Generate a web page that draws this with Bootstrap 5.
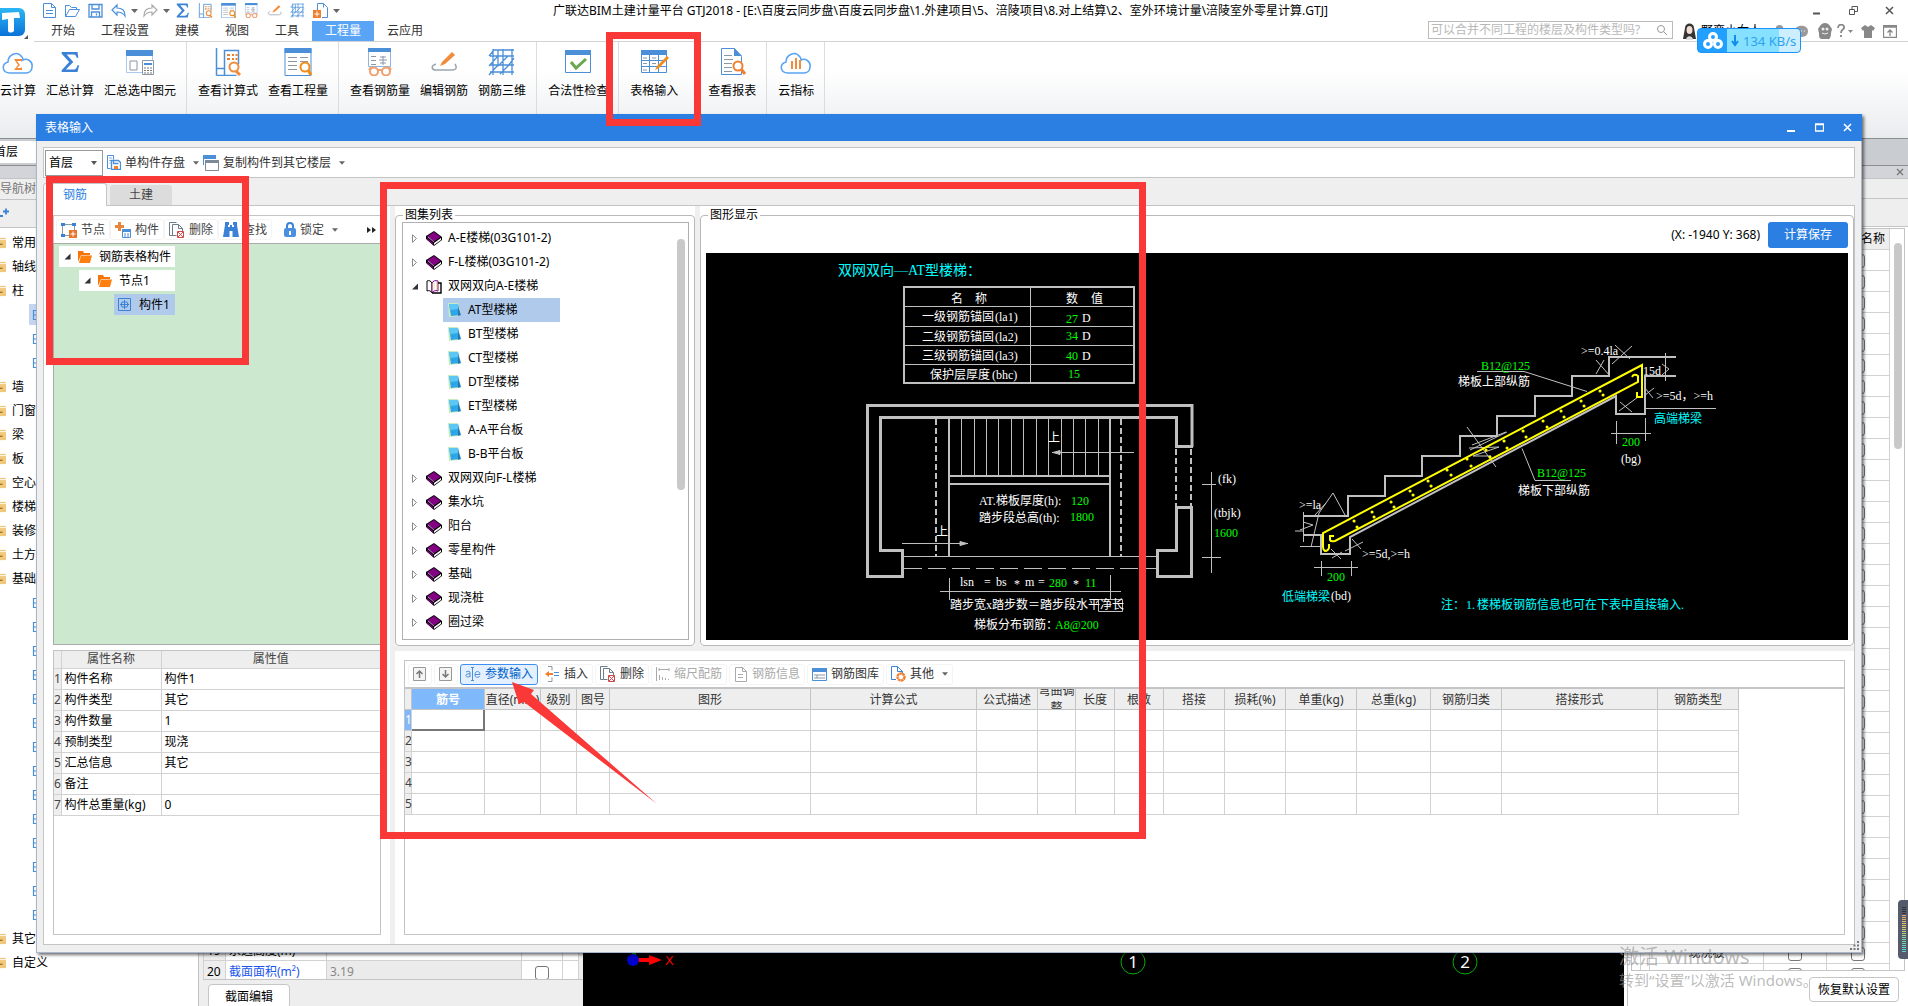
<!DOCTYPE html>
<html lang="zh-CN">
<head>
<meta charset="utf-8">
<meta name="viewport" content="width=device-width, initial-scale=1">
<title>广联达BIM土建计量平台 GTJ2018</title>
<link rel="stylesheet" href="https://cdn.jsdelivr.net/npm/bootstrap@5.3.0/dist/css/bootstrap.min.css">
<style>
:root{--blue:#2c7fe2;--line:#c3c4c6;--face:#efefef;--mark:#fb3838}
html,body{height:100%}
body{font:12px/18px "Noto Sans","Noto Sans CJK SC",sans-serif;color:#000;background:#fff;overflow:hidden}
a{color:inherit;text-decoration:none}
button,input,select{font:inherit;color:inherit}
button{background:none;border:0;padding:0;white-space:nowrap}
svg{display:block;flex:none}
.app{height:100vh}
/* header */
.logo-cell{width:34px;height:42px;padding-top:7px}
.quick{width:519px;padding-left:8px;gap:8px;height:21px}
.quick svg{width:15px;height:15px}
.quick svg.caret{width:7px;height:4px;margin:0 -3px}
.win-ctl{width:120px;padding-right:14px}
.menu-row{height:21px;border-bottom:1px solid #d2d2d2;padding-left:4px}
.menu-row .nav-link{padding:0 13px;line-height:20px;color:#333;border-radius:0}
.menu-row .nav-link.active{background:#5aa4f5;color:#fff}
.search{width:245px;height:18px;border:1px solid #bbb;margin-right:9px}
.search input{border:0;outline:0;width:100%;background:none;padding:0 2px;line-height:16px}
.search input::placeholder{color:#b8b8b8;opacity:1}
.user-bar{width:226px;white-space:nowrap}
.ribbon{height:96px;background:linear-gradient(#fff 30%,#e9ecef)}
.ribbon-group{gap:10px;padding:6px 10px 0 11px;border-right:1px solid #dadcde}
.ribbon-group:first-child{padding-left:0}
.ribbon-group.wide{padding-right:18px}
.ribbon-group button{line-height:18px}
.ribbon-group svg{width:32px;height:28px;margin:0 auto 6px}
/* workspace behind the dialog */
.strip-a{height:28px;border-top:1px solid #8c8e90;border-bottom:1px solid #8c8e90;background:#c9cdd2}
.floor-box{width:120px;margin:2px 0;background:#fff;line-height:22px;text-indent:-6px}
.strip-b{height:12px;background:#d3d4d9}
.side{width:199px;border-right:1px solid var(--line)}
.bar-1{height:22px;border-top:1px solid var(--line);border-bottom:1px solid var(--line);background:#eee;line-height:20px;color:#777}
.bar-2{height:28px;border-bottom:1px solid var(--line);background:#eee}
.nav-tree{padding-top:3px}
.nav-tree li{height:24px;line-height:24px;display:flex;align-items:center}
.nav-tree li a{padding-left:6px}
.nav-tree li.leaf{padding-left:29px}
.nav-tree li.picked svg{background:#c3d5ef}
.attr-col{width:384px;background:#eee;padding-left:4px}
.attr-tbl{width:376px;background:#fff;table-layout:fixed}
.attr-tbl td{height:21px;border:1px solid #d2d2d2;padding:0 3px;line-height:19px}
.attr-foot{height:27px;padding:4px 5px 0;margin-top:-3px;position:relative;background:#eee;border-top:1px solid var(--line)}
.flat-btn{border:1px solid #c6c6c6;border-radius:4px;background:#fff;height:25px;line-height:23px}
.model-view{background:#000}
.right-col{width:281px;border-left:1px solid var(--line);margin-left:3px}
.right-box{margin:1px 3px 0;border:1px solid var(--line);overflow:hidden}
.right-foot{height:36px;padding:6px 9px 0}
.right-tbl{table-layout:fixed;width:258px;border-collapse:separate;border-spacing:0}
.right-tbl th,.right-tbl td{height:21px;padding:0;border-right:1px solid #d2d2d2;border-bottom:1px solid #d2d2d2;text-align:center;line-height:18px;font-weight:400}
.right-tbl th{background:#eee}
.chk{width:14px;height:14px;appearance:none;border:1px solid #777;border-radius:3px;margin:3px auto 0;display:block;background:#fff}
.thumb{width:8px;border-radius:4px;background:#c9c9c9}
.side-thumb{height:206px;margin-top:14px}
/* dialog */
.dlg{position:absolute;left:36px;right:46px;top:114px;bottom:53px;background:var(--face);border:1px solid #aab6cc;border-top:0;box-shadow:2px 2px 3px rgba(0,0,0,.55)}
.dlg-title{height:27px;background:var(--blue);color:#fff;padding:0 10px 0 9px;margin:0 -1px}
.dlg-body{padding:6px 6px 7px}
.tool-strip{height:31px;border:1px solid var(--line);background:#fff;padding:0 1px;color:#333}
.tool-strip select{width:58px;height:26px;border:1px solid #999;border-radius:0;background:#fff url("data:image/svg+xml,%3Csvg xmlns='http://www.w3.org/2000/svg' width='6' height='4'%3E%3Cpath d='M0 0h6L3 4z' fill='%23555'/%3E%3C/svg%3E") no-repeat right 5px center;appearance:none;padding:0 3px;color:#000;margin-right:4px}
.tabs{height:27px;padding-top:5px}
.tabs .nav-link{line-height:20px;border-radius:3px 3px 0 0;padding:0 19px;color:#444;background:#dcdcdc;height:20px;margin:2px 0 0 3px;border:0}
.tabs .nav-link.active{background:#fff;color:var(--blue);height:23px;line-height:22px;border:1px solid var(--line);border-bottom:0;position:relative;margin:0 0 -1px}
.pane{border:1px solid var(--line);background:#fff}
.pane-left{width:346px;padding:9px 9px 9px}
.pane-left .bar{height:28px;border:1px solid var(--line);border-bottom:0;padding-left:2px;color:#444}
.bar .tb{display:flex;align-items:center;gap:4px;height:21px;padding:0 4px;border:1px solid #f4f4f4;border-radius:3px}
.comp-tree{background:#cce8cf;border:1px solid #aaa;padding:2px 0 0 5px}
.tree-ln{height:21px;margin-bottom:3px;line-height:21px;background:#fff}
.tree-ln.l1{width:116px;padding-left:5px}
.tree-ln.l2{width:96px;margin-left:20px;padding-left:5px}
.tree-ln.l3{width:61px;margin-left:55px;padding-left:4px;background:#b0caec}
.tree-ln svg+svg{margin:0 7px}
.prop-box{height:285px;border:1px solid var(--line);margin-top:5px}
.prop-tbl{width:100%;table-layout:fixed}
.prop-tbl th,.prop-tbl td{border-right:1px solid #d2d2d2;border-bottom:1px solid #d2d2d2;height:21px;padding:0 3px;line-height:18px;font-weight:400}
.prop-tbl tr>:last-child{border-right:0}
.prop-tbl thead th{background:#eee;height:17px;line-height:16px;text-align:center;color:#444}
.prop-tbl .num{background:#eee;padding:0;color:#444;text-align:center}
.splitter{width:5px;background:var(--face)}
.upper{background:var(--face);gap:5px;padding-bottom:5px}
.upper>div{background:#fff}
fieldset{border:1px solid #b9b9b9;border-radius:4px;margin-top:2px;padding:0 5px 5px}
fieldset legend{float:none;width:auto;font-size:12px;line-height:14px;height:14px;margin:0 0 0 2px;padding:0 2px}
.atlas{width:300px}
.atlas-box{height:100%;border:1px solid #b0b0b0;padding:3px 3px 0 8px;margin-left:1px;overflow:hidden}
.atlas-box li{height:24px;line-height:24px;display:flex;align-items:center}
.atlas-box li a{padding-left:6px;color:#000}
.atlas-box li>svg:first-child{margin-right:7px;width:8px}
.atlas-box li.kid{margin-left:32px;width:117px;padding-left:4px}
.atlas-box li.kid>svg:first-child{width:15px;margin-right:0}
.atlas-box li.on{background:#b0caec}
.atlas-box .thumb{height:251px;margin-top:13px}
.calc-row{height:31px}
.calc-row .btn{--bs-btn-bg:#2c7fe2;height:26px;width:80px;padding:0;font-size:12px;border:0;border-radius:3px;line-height:26px}
.cad{width:100%;flex:1 1 0;min-height:0;background:#000}
.lower{height:293px;padding:9px 9px 9px}
.lower-box{border:1px solid var(--line);overflow:hidden}
.lower .bar{height:28px;border-bottom:2px solid #c3c4c6;padding-left:3px;gap:2px;color:#333}
.lower .bar .tb.on{background:#e4f0fd;border-color:#3d8ff0;color:#0062cc}
.lower .bar .tb:disabled{color:#aaa}
.steel{table-layout:fixed;width:1334px;border-collapse:separate;border-spacing:0}
.steel th,.steel td{height:21px;padding:0;border-right:1px solid #d2d2d2;border-bottom:1px solid #d2d2d2;font-weight:400;line-height:18px}
.steel thead th{background:#eee;color:#333;text-align:center;border-color:#c3c4c6}
.steel thead div{height:20px;line-height:17px;overflow:hidden;display:flex;align-items:center;justify-content:center}
.steel thead .cur{background:#7fb9fb;color:#fff;font-weight:700}
.steel .num{background:#eee;color:#444;text-align:center}
.steel .num.cur{background:#7fb9fb;color:#fff}
.steel .focus-cell{box-shadow:inset -1px -1px #777;border-color:#777}
.grip{position:absolute;right:2px;bottom:2px}
/* overlays */
.mark-box{position:absolute;border:7px solid var(--mark);pointer-events:none}
.m1{left:606px;top:32px;width:95px;height:94px}
.m2{left:46px;top:176px;width:203px;height:189px}
.m3{left:380px;top:182px;width:766px;height:657px}
.m-arrow{position:absolute;left:510px;top:681px}
.netdisk{position:absolute;right:107px;top:28px;width:104px;height:25px;border:1px solid #1b93f8;border-radius:4px;background:linear-gradient(90deg,#22a0ff 29px,#86e0ff 29px 81px,#cdeeff 81px);color:#2ba3f0;font-size:13px;padding-left:5px}
.wmark{position:absolute;right:96px;top:945px;color:rgba(150,150,150,.65);width:193px;white-space:nowrap;font-size:15px;line-height:22px;pointer-events:none}
.wmark strong{font-size:20px;font-weight:400;line-height:24px;display:block}
.meter{position:absolute;right:0;top:900px;width:10px;height:59px;border-radius:4px 0 0 4px;background:#565b6b;padding:7px 2px 7px 4px}
.meter div{height:100%;background:repeating-linear-gradient(transparent 0 1px,#565b6b 1px 2px),linear-gradient(#333 18%,#e8a070 18%,#e8d070 45%,#70d8a8 75%,#60d0d8)}
/* drawing */
.cad text{font:12px "Liberation Serif","Noto Sans CJK SC",serif;fill:#fff}
.cad .g{fill:#0f0}.cad .c{fill:#0ff}.cad .t14{font-size:14px}
</style>
</head>
<body>
<svg width="0" height="0" class="position-absolute" aria-hidden="true">
<defs>
<symbol id="caret" viewBox="0 0 7 4"><path d="M0 0h7L3.500 4z" fill="#666"/></symbol>
<symbol id="doc" viewBox="0 0 15 15"><path d="M1.500.5h8l4 4v10h-12zM9.500.5v4h4M4 7.500h7M4 10.500h7" fill="none" stroke="#4a8fd8"/></symbol>
<symbol id="open" viewBox="0 0 15 15"><path d="M.5 13.500v-11h4l2 2h5v2M.5 13.500l4-7h10l-4 7z" fill="none" stroke="#4a8fd8"/></symbol>
<symbol id="disk" viewBox="0 0 15 15"><path d="M1 1.500h13v12.500H1zM4 1.500v4.500h7V1.500M3.500 14V9h8v5M8.500 10.500v2" fill="none" stroke="#4a8fd8" stroke-width="1.300"/></symbol>
<symbol id="undo" viewBox="0 0 15 15"><path d="M6 2L1 7l5 5V9c4 0 6 1 8 4 0-6-3-8-8-8z" fill="none" stroke="#4a8fd8" stroke-width="1.200"/></symbol>
<symbol id="redo" viewBox="0 0 15 15"><path d="M9 2l5 5-5 5V9c-4 0-6 1-8 4 0-6 3-8 8-8z" fill="none" stroke="#aaa" stroke-width="1.200"/></symbol>
<symbol id="sigma" viewBox="0 0 24 26"><path d="M2 1h19l1 7h-2c-1-4-2-4-5-4H8l8 9-9 9h9c3 0 4-1 5-5h2l-2 8H2v-2l9-10L2 3z" fill="#3b82d6"/></symbol>
<symbol id="calc" viewBox="0 0 28 28"><path d="M2.500 0v27.500M2.500 20.500h8v7M2.500 27.500h20M10.500 20V2.500h14V16" fill="none" stroke="#4a8fd8" stroke-width="1.500"/><path d="M13 6h3v2h-3zM18 6h2v2h-2zM21.500 6h2v2h-2zM13 10h3v2h-3zM18 10h2v2h-2zM21.500 10h2v2h-2z" fill="#e8802c"/><circle cx="20" cy="19" r="4.500" fill="#fff" stroke="#f08c3a" stroke-width="2"/><path d="M22 23l4 4" stroke="#f08c3a" stroke-width="3"/></symbol>
<symbol id="qty" viewBox="0 0 28 28"><path d="M1 .5h26v27H1z" fill="#fff" stroke="#4a8fd8"/><path d="M.5 0h27v5H.5z" fill="#4a8fd8"/><path d="M4 9.500h9M4 13.500h9M4 17.500h9M4 21.500h9M16 9.500h8M16 13.500h8" stroke="#8a97a6"/><circle cx="21" cy="19" r="4.500" fill="#fff" stroke="#f08c1a" stroke-width="2"/><path d="M24 22l3 5" stroke="#f08c1a" stroke-width="3"/></symbol>
<symbol id="glass" viewBox="0 0 28 28"><path d="M2.500.5h22v18h-22z" fill="#fff" stroke="#8bb6e6"/><path d="M2 0h23v4H2z" fill="#4a8fd8"/><path d="M5 8.500h5M5 12.500h5M5 16.500h5M13 12h8M17 8v9M14 9h6M14 15h6" stroke="#8a97a6"/><path d="M3 22l2-3M25 22l-2-3" stroke="#f0a070" stroke-width="2"/><circle cx="8" cy="23.500" r="4" fill="#fff" stroke="#f0a070" stroke-width="2"/><circle cx="20" cy="23.500" r="4" fill="#fff" stroke="#f0a070" stroke-width="2"/><path d="M12 22h4" stroke="#f0a070" stroke-width="2"/></symbol>
<symbol id="pen" viewBox="0 0 28 28"><path d="M6 16c-6 2-4 6 0 6h16c5 0 5-3 3-6" fill="none" stroke="#9aa5b0" stroke-width="1.500"/><path d="M10 18l2-4L22 4l3 3-10 9z" fill="#f08c3a"/></symbol>
<symbol id="grid3" viewBox="0 0 28 28"><path d="M2 8h24M2 17h24M2 24h24M5 1v26M15 1v26M24 1v26M1 8l5-6h20M1 18l9-10M10 18l10-10M20 18l6-8M1 27l9-10M12 26l9-9M10 2v16" fill="none" stroke="#4a8fd8" stroke-width="1.300"/></symbol>
<symbol id="adddoc" viewBox="0 0 15 15"><path d="M4.500 7V.5h6l4 4v10H9M10.500.5v4" fill="none" stroke="#4a8fd8"/><path d="M0 7h8v8H0z" fill="#f08030"/><path d="M4 8.500v5M1.500 11h5" stroke="#fff"/></symbol>
<symbol id="cloud" viewBox="0 0 32 28"><path d="M8 25c-8 0-9-9-2-11 0-7 9-12 14-5 1 1 1 2 1 3 4-2 10 1 9 7 0 4-3 6-6 6z" fill="none" stroke="#5aa4f5" stroke-width="1.600"/></symbol>
<symbol id="fold" viewBox="0 0 7 14"><path d="M0 1h7v12H0z" fill="#f0c87c"/><path d="M0 3h7" stroke="#fff"/><path d="M0 8.500h3" stroke="#a07020" stroke-width="1.500"/></symbol>
<symbol id="bits" viewBox="0 0 8 21"><path d="M4.500 6.500h7v9h-7zM4.500 11h5" fill="none" stroke="#4a8fd8" stroke-width="1.200"/></symbol>
<symbol id="orf" viewBox="0 0 14 12"><path d="M0 0h5l1 2h6v2H3L0 11z" fill="#f77408"/><path d="M3 4.500h11L12 12H1z" fill="#ff7f10"/></symbol>
<symbol id="dn" viewBox="0 0 7 7"><path d="M6.500.5v6h-6z" fill="#333"/></symbol>
<symbol id="rt" viewBox="0 0 8 9"><path d="M1.500.8v7.500l4-3.800z" fill="#fff" stroke="#888"/></symbol>
<symbol id="book" viewBox="0 0 16 15"><path d="M0 5L8 0l8 6v3l-8 6-8-7z" fill="#000"/><path d="M1 5.500L8 1l6.500 5L8 10.500z" fill="#820082"/><path d="M1 7l6 5v2L1 8.500z" fill="#820082"/><path d="M8 12l7-5v2l-7 5z" fill="#fff"/><path d="M2 6l6 5" stroke="#fff" stroke-width=".6"/></symbol>
<symbol id="bookopen" viewBox="0 0 16 15"><path d="M1 2c2-1 4 0 5 2v10c-1-2-3-3-5-2z" fill="#fff" stroke="#000"/><path d="M6 4c1-2 3-3 6-2v10c-3-1-5 0-6 2z" fill="#fff" stroke="#820082"/><path d="M12 4h3v10H6" fill="none" stroke="#000" stroke-width="1.400"/><path d="M8 4.500v6M10.500 3.500v7" stroke="#d8c820" stroke-dasharray="1 1"/></symbol>
<symbol id="note" viewBox="0 0 15 16"><path d="M1 1l10 0 3 11-3 2-9 1z" fill="#c9eac0"/><path d="M2 2h9l2 11-9 1z" fill="#2ea5e4"/><path d="M2 2h9l1 5-9 1z" fill="#5cc6f4"/><path d="M11 4l3 9-3 1z" fill="#2578b8"/></symbol>
<symbol id="del" viewBox="0 0 16 16"><path d="M3.500 13.500h-3V.5h7M3.500 2.500h6l4 4v3M3.500 2.500v11h4M9.500 2.500v4h4" fill="none" stroke="#6d7c86"/><path d="M8.500 9.500h6v6h-6z" fill="#fff" stroke="#d04848"/><path d="M9 10l5 5M14 10l-5 5" stroke="#d04848"/></symbol>
<symbol id="person" viewBox="0 0 14 14"><circle cx="7" cy="4" r="4" fill="#999"/><path d="M1 14c0-8 12-8 12 0z" fill="#999"/></symbol>
</defs>
</svg>

<div class="app d-flex flex-column">
<header>
  <div class="d-flex">
    <div class="logo-cell">
      <svg width="28" height="32" viewBox="0 0 28 32"><defs><linearGradient id="lg" x2="0" y2="1"><stop stop-color="#2bb6f6"/><stop offset="1" stop-color="#0a72d8"/></linearGradient></defs><rect x="-6" y="1" width="31" height="28" rx="6" fill="url(#lg)"/><path d="M2 6l17-1 1 6-6 0 0 13c-2 2-5 2-6 0V12l-6 1z" fill="#fff"/><path d="M28 28v4h-4z" fill="#555"/></svg>
    </div>
    <div class="flex-grow-1">
      <div class="d-flex align-items-center">
        <div class="quick d-flex align-items-center">
          <svg><use href="#doc"/></svg><svg><use href="#open"/></svg><svg><use href="#disk"/></svg><svg><use href="#undo"/></svg><svg class="caret"><use href="#caret"/></svg><svg><use href="#redo"/></svg><svg class="caret"><use href="#caret"/></svg><svg><use href="#sigma"/></svg><svg><use href="#calc"/></svg><svg><use href="#qty"/></svg><svg><use href="#glass"/></svg><svg><use href="#pen"/></svg><svg><use href="#grid3"/></svg><svg><use href="#adddoc"/></svg><svg class="caret"><use href="#caret"/></svg>
        </div>
        <div>广联达BIM土建计量平台 GTJ2018 - [E:\百度云同步盘\百度云同步盘\1.外建项目\5、涪陵项目\8.对上结算\2、室外环境计量\涪陵室外零星计算.GTJ]</div>
        <div class="win-ctl ms-auto d-flex justify-content-between ps-4">
          <svg width="9" height="9"><path d="M1 7.500h7" stroke="#555" stroke-width="2"/></svg>
          <svg width="9" height="9"><path d="M.5 3.500h5v5h-5zM3 3V.5h5.500v5H6" fill="none" stroke="#555"/></svg>
          <svg width="9" height="9"><path d="M1 1l7 7M8 1L1 8" stroke="#555" stroke-width="1.500"/></svg>
        </div>
      </div>
      <div class="menu-row d-flex">
        <nav class="nav flex-nowrap">
          <a class="nav-link" href="#">开始</a><a class="nav-link" href="#">工程设置</a><a class="nav-link" href="#">建模</a><a class="nav-link" href="#">视图</a><a class="nav-link" href="#">工具</a><a class="nav-link active" href="#">工程量</a><a class="nav-link" href="#">云应用</a>
        </nav>
        <label class="search ms-auto d-flex align-items-center"><input type="text" aria-label="搜索" placeholder="可以合并不同工程的楼层及构件类型吗?"><svg width="12" height="12" class="me-1"><circle cx="5" cy="5" r="3.500" fill="none" stroke="#999"/><path d="M8 8l3 3" stroke="#999"/></svg></label>
        <div class="user-bar d-flex align-items-center gap-1">
          <svg width="15" height="17"><path d="M3 5c0-6 9-6 9 0l2 11H1z" fill="#333"/><ellipse cx="7.500" cy="7" rx="3" ry="4" fill="#f2dcd4"/><path d="M4 17c0-5 7-5 7 0z" fill="#ddd"/></svg>
          <span>野蛮小女人</span>
          <svg width="13" height="15" class="ms-2"><use href="#person"/></svg>
          <svg width="15" height="15" class="ms-1"><path d="M1 7c0-7 13-7 13 0s-7 6-9 6l-3 1 1-3c-1-1-2-2-2-4z" fill="#999"/><path d="M4 7h1M7 7h1M10 7h1" stroke="#fff"/></svg>
          <svg width="16" height="18" class="ms-1"><path d="M1 7l2-3c2-4 8-4 10 0l2 3-1 4c0 5-2 7-3 6H5c-3 0-3-3-3-6z" fill="#888"/><circle cx="6" cy="7" r="1.500" fill="#eee"/><circle cx="10" cy="7" r="1.500" fill="#eee"/><path d="M5 11q3 2 6 0" stroke="#eee" fill="none"/></svg>
          <svg width="16" height="14"><path d="M1 4c0-5 7-4 6 0-1 2-3 2-3 5M4 11v2" fill="none" stroke="#888" stroke-width="1.800"/><path d="M11 6h5l-2.500 3z" fill="#888"/></svg>
          <svg width="14" height="13" class="ms-1"><path d="M4 0l3 2 3-2 4 3-2 3-1-1v8H3V5L2 6 0 3z" fill="#888"/></svg>
          <svg width="14" height="13" class="ms-1"><path d="M.5.5h13v12H.5zM0 2h14M7 11V5M4.500 7.500L7 5l2.500 2.500" fill="none" stroke="#888" stroke-width="1.300"/></svg>
        </div>
      </div>
    </div>
  </div>
  <div class="ribbon d-flex">
    <div class="ribbon-group d-flex align-items-start">
      <button><svg viewBox="0 0 32 28"><use href="#cloud"/><path d="M12 11h8v3l-1-1h-4l3 4-3 3h4l1-1v3h-8l4-5z" fill="#f08c3a"/></svg>云计算</button>
      <button><svg viewBox="-4 0 32 28"><use href="#sigma" x="2" width="20" height="28"/></svg>汇总计算</button>
      <button><svg viewBox="0 0 32 28"><path d="M2.500 2.500h26v22h-26z" fill="#fff" stroke="#a9c9ee"/><path d="M2 2h27v6H2z" fill="#4a8fd8"/><path d="M6 13h7v9H6z" fill="none" stroke="#8a97a6"/><path d="M18.500 12.500h11v14h-11z" fill="#fff" stroke="#8a97a6"/><path d="M20 15h8v2h-8z" fill="#4a8fd8"/><path d="M20 20h8M20 22.500h8M20 25h8" stroke="#777" stroke-dasharray="2 1"/></svg>汇总选中图元</button>
    </div>
    <div class="ribbon-group d-flex align-items-start">
      <button><svg><use href="#calc"/></svg>查看计算式</button>
      <button><svg><use href="#qty"/></svg>查看工程量</button>
    </div>
    <div class="ribbon-group d-flex align-items-start">
      <button><svg><use href="#glass"/></svg>查看钢筋量</button>
      <button><svg><use href="#pen"/></svg>编辑钢筋</button>
      <button><svg><use href="#grid3"/></svg>钢筋三维</button>
    </div>
    <div class="ribbon-group d-flex align-items-start">
      <button><svg viewBox="0 0 32 28"><path d="M3.500 3.500h25v21h-25z" fill="#fff" stroke="#4a8fd8"/><path d="M3 2h26v5H3z" fill="#4a8fd8"/><path d="M9 14l5 6 10-9" fill="none" stroke="#6aa84f" stroke-width="3"/></svg>合法性检查</button>
    </div>
    <div class="ribbon-group wide d-flex align-items-start">
      <button><svg viewBox="0 0 32 28"><path d="M3.500 3.500h25v21h-25zM3 12.500h26M3 18.500h26M11.500 7v18M20.500 7v18" fill="#fff" stroke="#4a8fd8"/><path d="M3 2h26v5H3z" fill="#4a8fd8"/><path d="M5 10h4M14 10h4M5 15.500h4M14 15.500h4M5 22h4" stroke="#8a97a6"/><path d="M17 22l2-4 10-10 2 2-10 10z" fill="#f08c1a"/></svg>表格输入</button>
    </div>
    <div class="ribbon-group d-flex align-items-start">
      <button><svg viewBox="0 0 32 28"><path d="M5.500.5h13l7 8v18h-20z" fill="#fff" stroke="#4a8fd8"/><path d="M18 0v8h8z" fill="#4a8fd8"/><path d="M8 7.500h8M8 11.500h9M8 15.500h8M8 19.500h8M8 23.500h8" stroke="#8a97a6"/><circle cx="22" cy="18" r="4.500" fill="#fff" stroke="#f08030" stroke-width="2"/><path d="M25 21l4 5" stroke="#f08030" stroke-width="3"/></svg>查看报表</button>
    </div>
    <div class="ribbon-group d-flex align-items-start">
      <button><svg viewBox="0 0 32 28"><use href="#cloud"/><path d="M12 13v8M16 10v11M20 12v9" stroke="#f08c3a" stroke-width="2"/></svg>云指标</button>
    </div>
  </div>
</header>

<div class="strip-a"><div class="floor-box">首层</div></div>
<div class="strip-b d-flex align-items-center justify-content-end pe-1"><svg width="8" height="8"><path d="M1 1l6 6M7 1L1 7" stroke="#777" stroke-width="1.300"/></svg></div>
<div class="d-flex flex-grow-1 overflow-hidden">
  <aside class="side overflow-hidden flex-shrink-0">
    <div class="bar-1 overflow-hidden">导航树</div>
    <div class="bar-2 d-flex align-items-center"><svg width="10" height="14"><path d="M0 10h3M3 5.500h6M6 2.500v6" stroke="#3b82d6" stroke-width="1.800"/></svg></div>
    <ul class="nav-tree list-unstyled m-0" id="navTree"></ul>
  </aside>
  <section class="attr-col d-flex flex-column justify-content-end flex-shrink-0">
    <table class="attr-tbl"><colgroup><col style="width:22px"><col style="width:101px"><col><col style="width:41px"><col style="width:16px"></colgroup>
      <tr><td style="background:#eee">19</td><td>永远高度(m)</td><td></td><td></td><td></td></tr>
      <tr><td style="background:#eee">20</td><td style="color:#1a56ee">截面面积(m²)</td><td style="background:#ebebeb;color:#888">3.19</td><td class="p-0"><input type="checkbox" class="chk" aria-label="截面面积附加"></td><td></td></tr>
    </table>
    <div class="attr-foot overflow-hidden"><button class="flat-btn px-3">截面编辑</button></div>
  </section>
  <section class="model-view flex-grow-1 d-flex align-items-end">
    <svg width="100%" height="53" viewBox="0 0 1041 53" preserveAspectRatio="xMinYMax slice"><path d="M51 0v6" stroke="#0a0" stroke-width="4"/><path d="M55 7h14" stroke="red" stroke-width="4"/><path d="M66 2l13 5-13 5z" fill="red"/><circle cx="50" cy="7" r="6" fill="#00c"/><text x="82" y="12" fill="red" font-size="13" font-family="Liberation Sans">X</text><g fill="none" stroke="#0a0"><circle cx="550" cy="9" r="12"/><circle cx="882" cy="9" r="12"/></g><g fill="#fff" font-size="17" text-anchor="middle"><text x="550" y="15">1</text><text x="882" y="15">2</text></g></svg>
  </section>
  <section class="right-col d-flex flex-column flex-shrink-0">
    <div class="bar-1"></div><div class="bar-2"></div>
    <div class="right-box d-flex flex-grow-1">
      <div class="overflow-hidden"><table class="right-tbl"><colgroup><col style="width:9px"><col style="width:9px"><col><col style="width:63px"><col style="width:63px"></colgroup><thead><tr><th></th><th></th><th></th><th></th><th class="text-end pe-1">名称</th></tr></thead><tbody id="rightRows"></tbody></table></div>
      <div class="thumb side-thumb ms-1"></div>
    </div>
    <div class="right-foot text-end"><button class="flat-btn px-2">恢复默认设置</button></div>
  </section>
</div>
</div>

<main class="dlg d-flex flex-column">
  <div class="dlg-title d-flex align-items-center">表格输入
    <div class="ms-auto d-flex" style="gap:19px">
      <svg width="9" height="9"><path d="M0 8h8" stroke="#fff" stroke-width="2"/></svg>
      <svg width="9" height="9"><path d="M.5 1v7h8V1zM0 1.500h9" fill="none" stroke="#fff" stroke-width="1.300"/></svg>
      <svg width="9" height="9"><path d="M1 1l7 7M8 1L1 8" stroke="#fff" stroke-width="1.600"/></svg>
    </div>
  </div>
  <div class="dlg-body d-flex flex-column flex-grow-1">
    <div class="tool-strip d-flex align-items-center">
      <select aria-label="楼层"><option>首层</option></select>
      <button class="d-flex align-items-center gap-1"><svg width="14" height="15"><path d="M3.500 13.500h-3V.5h6v4M2.500 3h2M2.500 5.500h2M2.500 8h1" fill="none" stroke="#4a8fd8"/><path d="M4.500 5.500h7l2 2v7h-9zM6.500 5.500v3h5" fill="#fff" stroke="#4a8fd8" stroke-width="1.300"/><path d="M7 11h4v3H7z" fill="#f08030"/></svg><span>单构件存盘</span><svg width="6" height="4" class="ms-1"><use href="#caret"/></svg></button>
      <button class="d-flex align-items-center ms-1"><svg width="16" height="16"><path d="M.5 10V.5h12V3" fill="none" stroke="#4a8fd8"/><path d="M0 0h13v4H0z" fill="#4a8fd8"/><path d="M2.500 5.500h13v10h-13z" fill="#fff" stroke="#7e8b96"/><path d="M2 5h14v3H2z" fill="#7e8b96"/></svg><span class="ps-1">复制构件到其它楼层</span><svg width="6" height="4" class="ms-2"><use href="#caret"/></svg></button>
    </div>
    <nav class="tabs nav"><a class="nav-link active" href="#">钢筋</a><a class="nav-link" href="#">土建</a></nav>
    <div class="pane d-flex flex-grow-1">
      <section class="pane-left d-flex flex-column flex-shrink-0">
        <div class="bar d-flex align-items-center">
          <button class="tb"><svg width="16" height="16"><path d="M3 2.500h9M3 13.500h5M1.500 4v8M13.500 4v4" stroke="#8a97a6" fill="none"/><path d="M0 1h4v3H0zM11 1h4v3h-4zM0 12h4v3H0z" fill="#3b82d6"/><path d="M8 8h8v8H8z" fill="#e8762c"/><path d="M12 9.500v5M9.500 12h5" stroke="#fff"/></svg>节点</button>
          <button class="tb"><svg width="16" height="16"><path d="M3 0h3v3h3v3H6v3H3V6H0V3h3z" fill="#e8853c"/><path d="M7.500 7.500h8v8h-8z" fill="#fff" stroke="#4a8fd8"/><path d="M7 7h9v3H7z" fill="#4a8fd8"/><path d="M9 12h5M9 14h5" stroke="#4a8fd8" stroke-dasharray="2 1"/></svg>构件</button>
          <button class="tb"><svg width="16" height="16"><use href="#del"/></svg>删除</button>
          <button class="tb"><svg width="16" height="16"><path d="M2 3h3v2h2V3h2v2h2V3h3l2 12H9.500V9h-3v6H0z" fill="#3b82d6"/><path d="M2 0h4v3H2zM10 0h4v3h-4z" fill="#3b82d6"/></svg>查找</button>
          <button class="tb border-0 ps-2 ms-1"><svg width="12" height="15"><path d="M3 7V4c0-4 6-4 6 0v3" fill="none" stroke="#3b82d6" stroke-width="2"/><rect y="6" width="12" height="9" rx="2" fill="#4a8fe0"/><path d="M6 9v4" stroke="#fff" stroke-width="2"/></svg>锁定<svg width="6" height="4" class="ms-1"><use href="#caret"/></svg></button>
          <svg width="9" height="6" class="ms-auto me-1"><path d="M0 0v6l4-3zM5 0v6l4-3z" fill="#222"/></svg>
        </div>
        <div class="comp-tree flex-grow-1">
          <div class="tree-ln l1 d-flex align-items-center"><svg width="7" height="7"><use href="#dn"/></svg><svg width="14" height="12"><use href="#orf"/></svg>钢筋表格构件</div>
          <div class="tree-ln l2 d-flex align-items-center"><svg width="7" height="7"><use href="#dn"/></svg><svg width="14" height="12"><use href="#orf"/></svg>节点1</div>
          <div class="tree-ln l3 d-flex align-items-center"><svg width="13" height="13" class="me-2"><path d="M.5.5h12v12H.5zM2 6.500h9M6.500 2v9M4 4q-2 2.500 0 5h5q2-2.500 0-5z" fill="none" stroke="#3b82d6"/></svg>构件1</div>
        </div>
        <div class="prop-box">
          <table class="prop-tbl"><colgroup><col style="width:7px"><col style="width:100px"><col></colgroup>
            <thead><tr><th></th><th>属性名称</th><th>属性值</th></tr></thead>
            <tbody>
            <tr><td class="num">1</td><td>构件名称</td><td>构件1</td></tr>
            <tr><td class="num">2</td><td>构件类型</td><td>其它</td></tr>
            <tr><td class="num">3</td><td>构件数量</td><td>1</td></tr>
            <tr><td class="num">4</td><td>预制类型</td><td>现浇</td></tr>
            <tr><td class="num">5</td><td>汇总信息</td><td>其它</td></tr>
            <tr><td class="num">6</td><td>备注</td><td></td></tr>
            <tr><td class="num">7</td><td>构件总重量(kg)</td><td>0</td></tr>
            </tbody></table>
        </div>
      </section>
      <div class="splitter flex-shrink-0"></div>
      <section class="d-flex flex-column flex-grow-1" style="min-width:0">
        <div class="upper d-flex flex-grow-1">
          <div class="atlas flex-shrink-0 d-flex"><fieldset class="flex-grow-1"><legend>图集列表</legend>
            <div class="atlas-box d-flex">
              <ul class="list-unstyled m-0 flex-grow-1">
                <li><svg height="9"><use href="#rt"/></svg><svg width="16" height="15"><use href="#book"/></svg><a href="#">A-E楼梯(03G101-2)</a></li>
                <li><svg height="9"><use href="#rt"/></svg><svg width="16" height="15"><use href="#book"/></svg><a href="#">F-L楼梯(03G101-2)</a></li>
                <li><svg height="7"><use href="#dn"/></svg><svg width="16" height="15"><use href="#bookopen"/></svg><a href="#">双网双向A-E楼梯</a></li>
                <li class="kid on"><svg height="16"><use href="#note"/></svg><a href="#">AT型楼梯</a></li>
                <li class="kid"><svg height="16"><use href="#note"/></svg><a href="#">BT型楼梯</a></li>
                <li class="kid"><svg height="16"><use href="#note"/></svg><a href="#">CT型楼梯</a></li>
                <li class="kid"><svg height="16"><use href="#note"/></svg><a href="#">DT型楼梯</a></li>
                <li class="kid"><svg height="16"><use href="#note"/></svg><a href="#">ET型楼梯</a></li>
                <li class="kid"><svg height="16"><use href="#note"/></svg><a href="#">A-A平台板</a></li>
                <li class="kid"><svg height="16"><use href="#note"/></svg><a href="#">B-B平台板</a></li>
                <li><svg height="9"><use href="#rt"/></svg><svg width="16" height="15"><use href="#book"/></svg><a href="#">双网双向F-L楼梯</a></li>
                <li><svg height="9"><use href="#rt"/></svg><svg width="16" height="15"><use href="#book"/></svg><a href="#">集水坑</a></li>
                <li><svg height="9"><use href="#rt"/></svg><svg width="16" height="15"><use href="#book"/></svg><a href="#">阳台</a></li>
                <li><svg height="9"><use href="#rt"/></svg><svg width="16" height="15"><use href="#book"/></svg><a href="#">零星构件</a></li>
                <li><svg height="9"><use href="#rt"/></svg><svg width="16" height="15"><use href="#book"/></svg><a href="#">基础</a></li>
                <li><svg height="9"><use href="#rt"/></svg><svg width="16" height="15"><use href="#book"/></svg><a href="#">现浇桩</a></li>
                <li><svg height="9"><use href="#rt"/></svg><svg width="16" height="15"><use href="#book"/></svg><a href="#">圈过梁</a></li>
              </ul>
              <div class="thumb"></div>
            </div></fieldset></div>
          <div class="flex-grow-1 d-flex"><fieldset class="d-flex flex-column flex-grow-1"><legend>图形显示</legend>
            <div class="calc-row d-flex justify-content-end align-items-start flex-shrink-0"><span class="pt-1 me-2">(X: -1940 Y: 368)</span><button class="btn btn-primary">计算保存</button></div>
            <svg class="cad" viewBox="706 253 1142 387" preserveAspectRatio="xMidYMid meet">
              <g fill="none" stroke="#c0c0c0">
                <path stroke-width="2" d="M904 287h230v96H904z"/>
                <path d="M904 306.500h230M904 326.500h230M904 345.500h230M904 364.500h230M1030.500 287v96"/>
                <path stroke-width="3" d="M1192 447V405.500H867.500V576.500H902.500V550.500H880.500V417.500H1176.500V446.500H1193M1193 507.500H1176.500V550.500H1157.500V576.500H1191.500V507"/>
                <path stroke-width="2" stroke-dasharray="6 3" d="M936 419v137M1121 419v137M1176 449v58M1191 449v58"/>
                <path stroke-width="2" d="M949 417v140M1110 417v140M949 476h161M949 484h161"/>
                <path d="M961.500 418v57M974.500 418v57M986.500 418v57M998.500 418v57M1011.500 418v57M1023.500 418v57M1036.500 418v57M1048.500 418v57M1061.500 418v57M1073.500 418v57M1085.500 418v57M1098.500 418v57M903 556.500h254M1052 452.500h82M902 543.500h66"/>
                <path stroke-dasharray="18 6" d="M904 568.500h253"/>
                <path d="M940 591.500h181M949.500 578v22M1110.500 575v24M1211.500 472v101M1202 484.500h14M1202 557.500h19M1098.500 599.500h24v12h-24z"/>
                <path d="M1053 452.500l7-2v4zM967 543.500l-7-2v4z" fill="#c0c0c0"/>
                <path stroke-width="2" d="M1303 516H1348V496H1385V476H1422V456H1460V436H1497V416H1535V396H1572V376H1609V357H1676M1676 376H1645V414H1616V396L1350 537V554H1321V535H1303"/>
                <path d="M1477 371.500h47l63 20M1571 480.500h-36l-13-32M1645 408.500h71M1611 433.500h40M1616.500 421v23M1645.500 418v23M1314 567.500h44M1321.500 561v15M1351.500 561v15M1665.500 353v28M1662 364l7 5-7 6M1303.500 512v30M1303 522l10 3-13 5M1295 531h8M1300 546.500h20M1311 547l8-34 14-20 12 22M1315 515l11-12"/>
                <path d="M1596 360l14 16M1604 360l-8 14M1615 345l15 14M1632 346l-20 18M1620 402l12 10M1619 411l19-14M1645 388l8 10M1654 388l-10 8M1331 549l10 10M1345 551l18-9M1352 539l9 10M1332 558l10-6"/>
                <path d="M1467 427l29 40M1470 450l37-18M1469 448l30-1-26 9h18M1472 445l34-13"/>
              </g>
              <g fill="none" stroke="#ff0" stroke-width="2">
                <path d="M1329 544v4q-1 3-4 3-2-1-2-4V533L1642 365V397H1637V392M1334 536h-4v4q1 2 5 1L1638 382V376q-4-3-6 1"/>
                <path id="bars" stroke-width="3" stroke-linecap="round"/>
              </g>
              <g>
                <text class="c t14" x="838" y="275">双网双向—AT型楼梯：</text>
                <text x="951" y="303">名</text><text x="975" y="303">称</text><text x="1066" y="303">数</text><text x="1091" y="303">值</text>
                <text x="922" y="321">一级钢筋锚固</text><text x="995" y="321">(la1)</text><text class="g" x="1066" y="323">27</text><text x="1082" y="322">D</text>
                <text x="922" y="341">二级钢筋锚固</text><text x="995" y="341">(la2)</text><text class="g" x="1066" y="340">34</text><text x="1082" y="340">D</text>
                <text x="922" y="360">三级钢筋锚固</text><text x="995" y="360">(la3)</text><text class="g" x="1066" y="360">40</text><text x="1082" y="360">D</text>
                <text x="930" y="379">保护层厚度</text><text x="992" y="379">(bhc)</text><text class="g" x="1068" y="378">15</text>
                <text x="1048" y="442">上</text><text x="936" y="536">上</text>
                <text x="979" y="505">AT.</text><text x="996" y="505">梯板厚度(h):</text><text class="g" x="1071" y="505">120</text>
                <text x="979" y="522">踏步段总高(th):</text><text class="g" x="1070" y="521">1800</text>
                <text x="960" y="586">lsn</text><text x="984" y="586">=</text><text x="996" y="586">bs</text><text x="1014" y="588">*</text><text x="1025" y="586">m</text><text x="1038" y="586">=</text><text class="g" x="1049" y="587">280</text><text x="1073" y="588">*</text><text class="g" x="1085" y="587">11</text>
                <text x="950" y="609">踏步宽x踏步数＝踏步段水平净长</text>
                <text x="974" y="629">梯板分布钢筋：</text><text class="g" x="1055" y="629">A8@200</text>
                <text x="1218" y="483">(fk)</text><text x="1214" y="517">(tbjk)</text><text class="g" x="1214" y="537">1600</text>
                <text class="g" x="1481" y="370">B12@125</text><text x="1458" y="386">梯板上部纵筋</text>
                <text class="g" x="1537" y="477">B12@125</text><text x="1518" y="495">梯板下部纵筋</text>
                <text x="1581" y="355">&gt;=0.4la</text><text x="1643" y="375">15d</text><text x="1656" y="400">&gt;=5d，&gt;=h</text>
                <text class="c" x="1654" y="423">高端梯梁</text><text class="g" x="1622" y="446">200</text><text x="1621" y="463">(bg)</text>
                <text x="1299" y="509">&gt;=la</text><text x="1362" y="558">&gt;=5d,&gt;=h</text><text class="g" x="1327" y="581">200</text>
                <text class="c" x="1282" y="601">低端梯梁</text><text x="1331" y="600">(bd)</text>
                <text class="c" x="1441" y="609">注：</text><text class="c" x="1466" y="609">1.</text><text class="c" x="1477" y="609">楼梯板钢筋信息也可在下表中直接输入.</text>
              </g>
            </svg>
          </fieldset></div>
        </div>
        <div class="lower d-flex flex-column flex-shrink-0">
          <div class="lower-box flex-grow-1">
            <div class="bar d-flex align-items-center">
              <button class="tb px-1" aria-label="上移"><svg width="14" height="14"><path d="M.5.5h12v13H.5z" fill="#f4f4f4" stroke="#999"/><path d="M6.500 11V4M3.500 7l3-3 3 3" fill="none" stroke="#777" stroke-width="1.500"/></svg></button>
              <button class="tb px-1" aria-label="下移"><svg width="14" height="14"><path d="M.5.5h12v13H.5z" fill="#f4f4f4" stroke="#999"/><path d="M6.500 3v7M3.500 7l3 3 3-3" fill="none" stroke="#777" stroke-width="1.500"/></svg></button>
              <button class="tb on px-1"><svg width="16" height="14"><path d="M1 5q4-2 4 1v4M5 7c-5-1-5 3-2 3q2 0 2-1M10 7.500h5c0-4-5-4-5 0s4 3 5 1.500M7.500 1v12M6 .5h3M6 13.500h3" fill="none" stroke="#4a8fd8"/></svg>参数输入</button>
              <button class="tb"><svg width="15" height="16"><path d="M3 .5h4v4M3 15.500h4v-4" fill="none" stroke="#8a97a6"/><path d="M0 8l4-3v2h4v2H4v2z" fill="#f08030"/><path d="M9 6.500h5M9 9.500h5" stroke="#4a8fd8"/></svg>插入</button>
              <button class="tb"><svg width="16" height="16"><use href="#del"/></svg>删除</button>
              <button class="tb" disabled><svg width="14" height="14"><path d="M.5 0v14M3 2.500h10M3 1v3M13 1v3M3.500 8v5M6.500 10v3M9.500 11v2M12.500 12v1" stroke="#aaa"/></svg>缩尺配筋</button>
              <button class="tb" disabled><svg width="14" height="15"><path d="M1.500.5h7l4 4v10h-11zM8.500.5v4h4M4 7.500h5M4 10.500h5" fill="none" stroke="#aaa"/></svg>钢筋信息</button>
              <button class="tb"><svg width="15" height="13"><path d="M.5.5h14v12H.5z" fill="#fff" stroke="#4a8fd8"/><path d="M0 0h15v4H0z" fill="#4a8fd8"/><path d="M2 7h11M2 10h11M5 7v3" stroke="#8a97a6"/></svg>钢筋图库</button>
              <button class="tb"><svg width="15" height="16"><path d="M5 13.500H.5V.5h6l5 5v2M6.500.5v5h5" fill="none" stroke="#3b82d6"/><circle cx="10" cy="11" r="3.500" fill="none" stroke="#f08030" stroke-width="2.500" stroke-dasharray="2.500 .4"/></svg>其他<svg width="6" height="4" class="ms-1"><use href="#caret"/></svg></button>
            </div>
            <table class="steel"><colgroup><col style="width:7px"><col style="width:73px"><col style="width:56px"><col style="width:36px"><col style="width:33px"><col style="width:201px"><col style="width:166px"><col style="width:61px"><col style="width:38px"><col style="width:39px"><col style="width:49px"><col style="width:61px"><col style="width:61px"><col style="width:71px"><col style="width:74px"><col style="width:71px"><col style="width:156px"><col style="width:81px"></colgroup>
              <thead><tr><th></th><th class="cur"><div>筋号</div></th><th><div>直径(mm)</div></th><th><div>级别</div></th><th><div>图号</div></th><th><div>图形</div></th><th><div>计算公式</div></th><th><div>公式描述</div></th><th><div>弯曲调整</div></th><th><div>长度</div></th><th><div>根数</div></th><th><div>搭接</div></th><th><div>损耗(%)</div></th><th><div>单重(kg)</div></th><th><div>总重(kg)</div></th><th><div>钢筋归类</div></th><th><div>搭接形式</div></th><th><div>钢筋类型</div></th></tr></thead>
              <tbody id="steelRows"></tbody>
            </table>
          </div>
        </div>
      </section>
    </div>
  </div>
  <svg class="grip" width="9" height="9"><path d="M7 0h2v2H7zM3.500 3.500h2v2h-2zM7 3.500h2v2H7zM0 7h2v2H0zM3.500 7h2v2h-2zM7 7h2v2H7z" fill="#777"/></svg>
</main>

<div class="netdisk d-flex align-items-center"><svg width="20" height="18"><g fill="none" stroke="#fff" stroke-width="3"><circle cx="10" cy="5" r="3.500"/><circle cx="5" cy="12" r="3.500"/><circle cx="15" cy="12" r="3.500"/></g></svg><svg width="8" height="11" class="mx-1 ps-1 overflow-visible"><path d="M4 0v9M1 6l3 4 3-4" fill="none" stroke="#0e8ee8" stroke-width="2"/></svg><span class="ps-1">134 KB/s</span></div>
<div class="wmark"><strong>激活 Windows</strong>转到“设置”以激活 Windows。</div>
<div class="meter"><div></div></div>
<div class="mark-box m1"></div><div class="mark-box m2"></div><div class="mark-box m3"></div>
<svg class="m-arrow" width="150" height="126"><path d="M2 1L24 9 21 13 147 123 14 21 9 23z" fill="#fb3838"/></svg>

<script src="https://cdn.jsdelivr.net/npm/bootstrap@5.3.0/dist/js/bootstrap.bundle.min.js"></script>
<script>
// navigation tree: an empty name is a leaf hidden behind the dialog
const names = ['常用','轴线','柱','','','','墙','门窗','梁','板','空心','楼梯','装修','土方','基础',
  ...Array(14).fill(''),'其它','自定义'];
document.getElementById('navTree').innerHTML = names.map((n, i) => n
  ? `<li><svg width="6" height="14"><use href="#fold"/></svg><a href="#">${n}</a></li>`
  : `<li class="leaf${i === 3 ? ' picked' : ''}"><svg width="8" height="21"><use href="#bits"/></svg></li>`).join('');
const box = '<input type="checkbox" class="chk" aria-label="显示">';
document.getElementById('rightRows').innerHTML = Array.from({length: 35}, (_, i) =>
  `<tr><td></td><td></td><td>${i === 33 ? '现浇板' : ''}</td><td>${box}</td><td>${box}</td></tr>`).join('');
document.getElementById('steelRows').innerHTML = [1,2,3,4,5].map(n =>
  `<tr><td class="num${n === 1 ? ' cur' : ''}">${n}</td>` + Array.from({length: 17}, (_, c) =>
  `<td${n === 1 && c === 0 ? ' class="focus-cell"' : ''}></td>`).join('') + '</tr>').join('');
// reinforcement dots inside the slab
const dots = [[1354,521],[1357,527],[1372,512],[1374,517],[1391,502],[1394,507],[1410,491],[1413,495],[1428,481],[1431,486],
  [1447,470],[1451,475],[1467,459],[1471,466],[1486,450],[1490,457],[1504,441],[1507,448],[1523,431],[1526,437],
  [1543,421],[1547,427],[1561,411],[1564,417],[1581,401],[1584,406],[1600,391],[1603,395]];
document.getElementById('bars').setAttribute('d', dots.map(p => `M${p[0]} ${p[1]}h.1`).join(''));
</script>
</body>
</html>
